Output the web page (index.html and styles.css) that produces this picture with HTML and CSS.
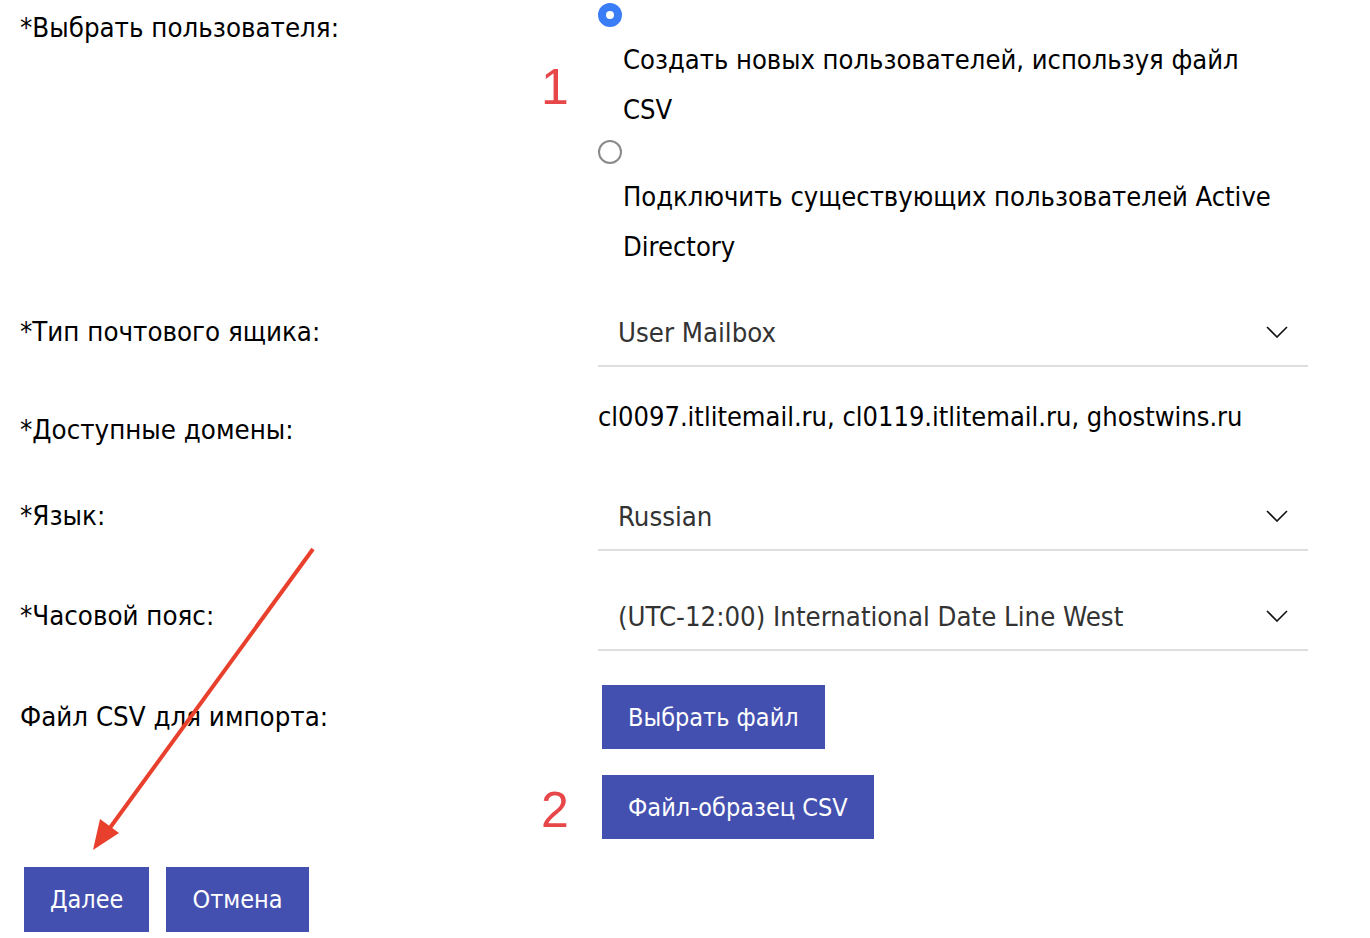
FILE: index.html
```html
<!DOCTYPE html>
<html lang="ru">
<head>
<meta charset="utf-8">
<title>Импорт пользователей</title>
<link rel="stylesheet" href="styles.css">
</head>
<body>
<div class="page">
  <div class="row row-user">
    <div class="label label-top">*Выбрать пользователя:</div>
    <div class="value radios">
      <div class="radio-item">
        <span class="radio checked"></span>
        <div class="radio-text">Создать новых пользователей, используя файл CSV</div>
      </div>
      <div class="radio-item">
        <span class="radio"></span>
        <div class="radio-text">Подключить существующих пользователей Active Directory</div>
      </div>
    </div>
  </div>

  <div class="row row-select row-mailbox">
    <div class="label">*Тип почтового ящика:</div>
    <div class="value select"><span class="select-text">User Mailbox</span><svg class="chev" viewBox="0 0 22 12"><path d="M1 1 L11 11 L21 1" /></svg></div>
  </div>

  <div class="row row-domains">
    <div class="label label-domains">*Доступные домены:</div>
    <div class="value domains">cl0097.itlitemail.ru, cl0119.itlitemail.ru, ghostwins.ru</div>
  </div>

  <div class="row row-select">
    <div class="label">*Язык:</div>
    <div class="value select"><span class="select-text">Russian</span><svg class="chev" viewBox="0 0 22 12"><path d="M1 1 L11 11 L21 1" /></svg></div>
  </div>

  <div class="row row-select row-tz">
    <div class="label">*Часовой пояс:</div>
    <div class="value select"><span class="select-text">(UTC-12:00) International Date Line West</span><svg class="chev" viewBox="0 0 22 12"><path d="M1 1 L11 11 L21 1" /></svg></div>
  </div>

  <div class="row row-file">
    <div class="label">Файл CSV для импорта:</div>
    <div class="value"><button class="btn">Выбрать файл</button></div>
  </div>

  <div class="row row-sample">
    <div class="label"></div>
    <div class="value"><button class="btn">Файл-образец CSV</button></div>
  </div>

  <div class="actions">
    <button class="btn btn-next">Далее</button>
    <button class="btn">Отмена</button>
  </div>
</div>

<span class="mark mark-1">1</span>
<span class="mark mark-2">2</span>
<svg class="arrow" viewBox="0 0 1370 938" width="1370" height="938">
  <line x1="313" y1="549" x2="104" y2="836" />
  <polygon points="93,850 100,819 119,833" />
</svg>
</body>
</html>
```

FILE: styles.css
```css
html, body {
  margin: 0;
  padding: 0;
  background: #ffffff;
}

body {
  width: 1370px;
  height: 938px;
  overflow: hidden;
  position: relative;
  font-family: "DejaVu Sans Condensed", "DejaVu Sans", sans-serif;
  color: #000;
}

.page {
  padding-left: 20px;
  display: flex;
  flex-direction: column;
}

.row {
  display: grid;
  grid-template-columns: 578px 710px;
  align-items: center;
}

.label {
  font-size: 27.4px;
  line-height: 36px;
}

.label-top {
  align-self: start;
  padding-top: 10px;
}

.radios {
  align-self: start;
  padding-top: 3px;
}

.radio-item {
  display: flex;
  flex-direction: column;
}

.radio {
  width: 24px;
  height: 24px;
  box-sizing: border-box;
  border-radius: 50%;
  border: 2px solid #8a8a8a;
  margin-bottom: 8px;
}

.radio.checked {
  border: 8px solid #3b7cf7;
  background: #fff;
}

.radio-text {
  padding-left: 25px;
  width: 666px;
  font-size: 27.1px;
  line-height: 50px;
}

.radio-item + .radio-item {
  margin-top: 5px;
}

.row-mailbox {
  margin-top: 25px;
}

.select {
  height: 70px;
  box-sizing: border-box;
  border-bottom: 2px solid #dedede;
  display: flex;
  align-items: center;
  justify-content: space-between;
  padding: 2px 20px 0 20px;
  font-size: 27.3px;
  color: #333;
}

.chev {
  width: 22px;
  height: 12px;
  fill: none;
  stroke: #111;
  stroke-width: 1.6;
}

.row-domains {
  height: 114px;
  align-items: start;
}

.label-domains {
  padding-top: 45px;
}

.domains {
  padding-top: 32px;
  font-size: 27px;
  line-height: 36px;
  color: #000;
}

.row-tz {
  margin-top: 30px;
}

.row-file {
  margin-top: 34px;
}

.row-sample {
  margin-top: 26px;
}

.btn {
  height: 64px;
  padding: 0 26px;
  border: none;
  background: #4450b0;
  color: #fff;
  font-family: "DejaVu Sans Condensed", "DejaVu Sans", sans-serif;
  font-size: 25px;
  margin-left: 4px;
  cursor: pointer;
}

.actions {
  margin-top: 28px;
  display: flex;
  gap: 17px;
}

.actions .btn {
  height: 65px;
  margin-left: 4px;
}

.actions .btn + .btn {
  margin-left: 0;
}

.mark {
  position: absolute;
  font-family: "Liberation Sans", Arial, sans-serif;
  font-size: 50px;
  line-height: 50px;
  color: #e8474a;
}

.mark-1 {
  left: 541px;
  top: 62px;
}

.mark-2 {
  left: 541px;
  top: 785px;
}

.arrow {
  position: absolute;
  left: 0;
  top: 0;
  pointer-events: none;
}

.arrow line {
  stroke: #e8402c;
  stroke-width: 4;
}

.arrow polygon {
  fill: #e8402c;
}
```
